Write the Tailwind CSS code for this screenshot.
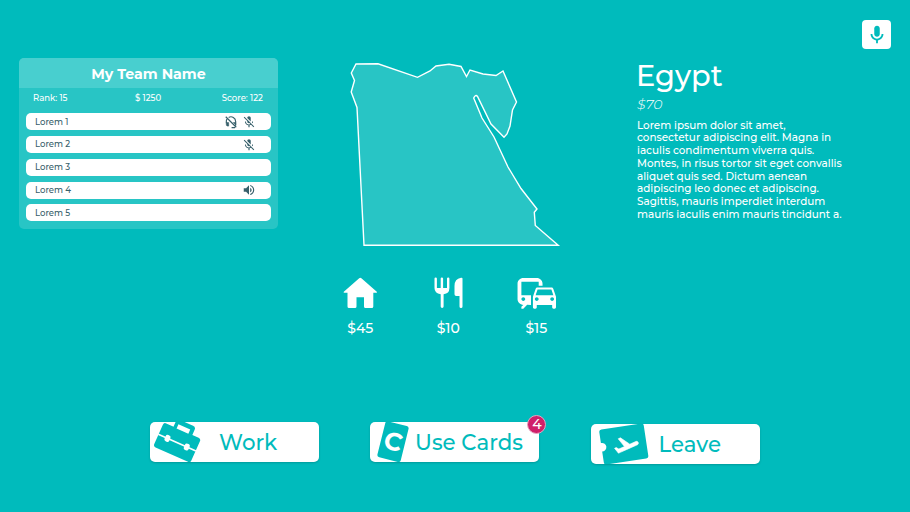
<!DOCTYPE html>
<html lang="en">
<head>
<meta charset="utf-8">
<title>Egypt</title>
<script src="https://cdn.jsdelivr.net/npm/@tailwindcss/browser@4"></script>
</head>
<body class="w-[910px] h-[512px] overflow-hidden bg-[#00bbbc] text-white font-medium font-['Montserrat','Inter',sans-serif]">
<svg class="hidden">
  <symbol id="mic-off" viewBox="0 0 24 24"><path d="M19 11h-1.7c0 .74-.16 1.43-.43 2.05l1.23 1.23c.56-.98.9-2.09.9-3.28zm-4.02.17c0-.06.02-.11.02-.17V5c0-1.66-1.34-3-3-3S9 3.34 9 5v.18l5.98 5.99zM4.27 3L3 4.27l6.01 6.01V11c0 1.66 1.33 3 2.99 3 .22 0 .44-.03.65-.08l1.66 1.66c-.71.33-1.5.52-2.31.52-2.76 0-5.3-2.1-5.3-5.1H5c0 3.41 2.72 6.23 6 6.72V21h2v-3.28c.91-.13 1.77-.45 2.54-.9L19.73 21 21 19.73 4.27 3z"/></symbol>
</svg>
<main class="flex flex-col h-full">
  <header class="flex justify-end pt-5 pr-[19px] h-[58px] shrink-0">
    <button class="flex items-center justify-center size-[29px] rounded-[4px] bg-white text-[#00bbbc]">
      <svg class="size-[22px]" viewBox="0 0 24 24" fill="currentColor"><path d="M12 14c1.66 0 3-1.34 3-3V5c0-1.66-1.34-3-3-3S9 3.34 9 5v6c0 1.66 1.34 3 3 3z"/><path d="M17 11c0 2.76-2.24 5-5 5s-5-2.24-5-5H5c0 3.53 2.61 6.43 6 6.92V21h2v-3.08c3.39-.49 6-3.39 6-6.92h-2z"/></svg>
    </button>
  </header>

  <section class="flex items-start h-[219px] shrink-0 pl-[19px]">
    <div class="w-[259px] h-[171px] rounded-[5px] bg-[#28c5c5] overflow-hidden">
      <h2 class="h-[30px] flex items-center justify-center pt-[3px] bg-[#48cfcf] text-[14.2px] font-bold">My Team Name</h2>
      <div class="grid grid-cols-3 pl-[14px] pr-[15px] h-[25px] pt-[4px] text-[8.5px] leading-[12px] font-medium">
        <span>Rank: 15</span><span class="text-center">$ 1250</span><span class="text-right">Score: 122</span>
      </div>
      <ul class="flex flex-col gap-[5.8px] pt-[0.3px] pl-[7px] pr-[7px] text-[#37606b] text-[8.5px] leading-[17px] font-medium">
        <li class="flex items-center h-[17px] rounded-[5px] bg-white pl-[9px] pr-[15px]"><span class="grow pt-px">Lorem 1</span>
          <svg class="size-[14px] mr-[4.500px]" viewBox="0 0 24 24" fill="none" stroke="currentColor" stroke-width="2"><path d="M3 3l18 18M8 4.2A8 8 0 0 1 20 11v7M4 14v-3a8 8 0 0 1 1-4M13 21.500h6"/><path d="M4 13h4v6H5.500L4 17.500zM16 13h4v4z" fill="currentColor" stroke-width="1"/></svg>
          <svg class="size-[14px]" fill="currentColor"><use href="#mic-off"/></svg></li>
        <li class="flex items-center h-[17px] rounded-[5px] bg-white pl-[9px] pr-[15px]"><span class="grow">Lorem 2</span>
          <svg class="size-[14px]" fill="currentColor"><use href="#mic-off"/></svg></li>
        <li class="flex items-center h-[17px] rounded-[5px] bg-white pl-[9px]"><span class="pt-px">Lorem 3</span></li>
        <li class="flex items-center h-[17px] rounded-[5px] bg-white pl-[9px] pr-[15px]"><span class="grow pt-px">Lorem 4</span>
          <svg class="size-[14px]" viewBox="0 0 24 24" fill="currentColor"><path d="M3 9v6h4l5 5V4L7 9H3zm13.500 3c0-1.770-1.020-3.290-2.500-4.030v8.050c1.480-.73 2.500-2.250 2.500-4.020zM14 3.230v2.060c2.890.86 5 3.540 5 6.710s-2.110 5.850-5 6.710v2.060c4.010-.91 7-4.490 7-8.770s-2.990-7.860-7-8.770z"/></svg></li>
        <li class="flex items-center h-[17px] rounded-[5px] bg-white pl-[9px]"><span class="pt-px">Lorem 5</span></li>
      </ul>
    </div>

    <svg class="ml-[70px] w-[214px] h-[190px] shrink-0" viewBox="348 58 214 190" fill="#28c5c5" stroke="#fff" stroke-width="1.4"><path d="M356 64L378 63.800L417.500 77.300L430 71L436 66L449 64.300L461 66.500L466.500 76.500L470 70L483 74L496 75.500L503 71L516.500 102L512.500 110L510 126L507 134L504 137.300L491 124L477.500 96.500Q475.500 94 473.700 98L482 118L494 137L508 167L521 188.500L537 209L534.300 212.300L535.300 225.500L558.200 245.200H364L357 107.500L351.200 92L354.500 80.500L351.300 73Z"/></svg>

    <article class="ml-[75px] whitespace-nowrap">
      <h1 class="-ml-px text-[28.800px] leading-[36px]">Egypt</h1>
      <p class="text-[14px] leading-[20px] italic font-light">$70</p>
      <p class="mt-[5.500px] text-[10.400px] leading-[12.800px]">Lorem ipsum dolor sit amet,<br>consectetur adipiscing elit. Magna in<br>iaculis condimentum viverra quis.<br>Montes, in risus tortor sit eget convallis<br>aliquet quis sed. Dictum aenean<br>adipiscing leo donec et adipiscing.<br>Sagittis, mauris imperdiet interdum<br>mauris iaculis enim mauris tincidunt a.</p>
    </article>
  </section>

  <section class="grid grid-cols-[88px_88px_88px] pl-[316.300px] h-[145px] shrink-0 text-[14px] leading-[18px]">
    <div class="flex flex-col items-center">
      <svg class="w-[35px] h-[32px]" viewBox="0 0 35 32" fill="#fff"><path d="M16.200 1.300Q17.300.3 18.400 1.300L33.800 14.700Q34.500 15.700 33.300 15.800H30.300V29.500Q30.300 31 28.800 31H22.500Q21 31 21 29.500V20.300H13.500V29.500Q13.500 31 12 31H6Q4.500 31 4.500 29.500V15.800H1.300Q.1 15.700.8 14.700Z"/></svg>
      <span class="mt-[10px]">$45</span>
    </div>
    <div class="flex flex-col items-center">
      <svg class="w-[30px] h-[32px]" viewBox="-.700 0 30 32" fill="#fff"><path d="M.8 1.600a1.200 1.200 0 0 1 2.400 0V11H7V1.600a1.200 1.200 0 0 1 2.400 0V11H13.300V1.600a1.200 1.200 0 0 1 2.400 0V11Q15.700 16.700 9.900 17.200V29.500a1.400 1.400 0 0 1-2.900 0V17.200Q.8 16.500.8 11ZM28.800 1.500V29.500a1.500 1.500 0 0 1-3 0V19H22.500Q20.800 19 20.800 17.300V9Q20.800 1.800 27.300.8 28.800.6 28.800 1.500Z"/></svg>
      <span class="mt-[10px]">$10</span>
    </div>
    <div class="flex flex-col items-center">
      <svg class="w-[40px] h-[32px]" viewBox="1.200 3.500 20.800 16.640" fill="#fff"><path d="M12 4H5C3.340 4 2 5.340 2 7v8c0 1.660 1.340 3 3 3l-1 1v1h1l2-2.030L9 18v-5H4V5.980L13 6v2h2V7c0-1.660-1.340-3-3-3zM5 14c.55 0 1 .45 1 1s-.45 1-1 1-1-.45-1-1 .45-1 1-1zm15.570-4.340c-.14-.4-.52-.66-.97-.66h-7.190c-.46 0-.83.26-.98.66L10 13.770l.01 5.510c0 .38.31.72.69.72h.62c.38 0 .68-.38.68-.76V18h8v1.240c0 .38.31.76.69.76h.61c.38 0 .69-.34.69-.72l.01-1.370v-4.140l-1.430-4.110zm-8.160.34h7.190l1.030 3h-9.250l1.030-3zM12 16c-.55 0-1-.45-1-1s.45-1 1-1 1 .45 1 1-.45 1-1 1zm8 0c-.55 0-1-.45-1-1s.45-1 1-1 1 .45 1 1-.45 1-1 1z"/></svg>
      <span class="mt-[10px]">$15</span>
    </div>
  </section>

  <nav class="flex items-start pl-[149.600px] text-[#00bbbc] text-[21.300px]">
    <button class="mt-[0.400px] flex items-center w-[169px] h-[40px] rounded-[5px] bg-white shadow-[0_1px_2px_rgba(0,60,60,0.25)]">
      <svg class="w-[60px] h-[40px] shrink-0" viewBox="0 0 60 40" fill="#00bbbc"><g transform="translate(27.200 20.400) rotate(24) scale(1.030)"><rect x="-19.700" y="-12.500" width="39.400" height="25.500" rx="2.500"/><path d="M-9.500-12V-18Q-9.500-21-6.500-21H7.500Q10.500-21 10.500-18V-12Z"/><rect x="-6" y="-16.500" width="12.500" height="4.500" fill="#fff"/><path d="M-20 .3H20" stroke="#fff" stroke-width="1.600"/><rect x="-12.700" y="-3" width="5" height="6.600" rx="2" fill="#fff"/><rect x="7.800" y="-3" width="5" height="6.600" rx="2" fill="#fff"/></g></svg>
      <span class="ml-[9.500px] pt-[2px]">Work</span>
    </button>
    <button class="relative ml-[51.500px] flex items-center w-[169px] h-[40px] rounded-[5px] bg-white shadow-[0_1px_2px_rgba(0,60,60,0.25)]">
      <svg class="w-[44px] h-[40px] shrink-0" viewBox="0 0 44 40" fill="#00bbbc"><g transform="translate(23 19.700) rotate(14)"><rect x="-12" y="-18.500" width="24" height="37" rx="2.500"/><text x="0" y="8.500" text-anchor="middle" font-size="25" font-weight="700" fill="#fff">C</text></g></svg>
      <span class="ml-[1px] pt-[2px] whitespace-nowrap">Use Cards</span>
      <span class="absolute left-[157.300px] top-[-7px] flex items-center justify-center size-[19px] rounded-full bg-[#d0206a] border border-[#e5a5c0] text-white text-[14px]">4</span>
    </button>
    <button class="ml-[52px] mt-[1.500px] flex items-center w-[169px] h-[40px] rounded-[5px] bg-white shadow-[0_1px_2px_rgba(0,60,60,0.25)]">
      <svg class="w-[60px] h-[40px] shrink-0" viewBox="0 0 60 40" fill="#00bbbc"><g transform="translate(32.800 20) rotate(-8.500)"><rect x="-22.500" y="-17.700" width="45" height="35.400" rx="2.500"/><circle cx="-22" cy="0" r="4.300" fill="#fff"/></g><path transform="translate(35.300 20.500) rotate(-9) scale(1.200) translate(-12 -9.800)" fill="#fff" stroke="#fff" stroke-width=".5" d="M22.070 9.640c-.21-.8-1.040-1.280-1.840-1.060L14.920 10l-6.900-6.430-1.930.51 4.140 7.170-4.970 1.330-1.970-1.540-1.450.39 1.820 3.160.77 1.330 1.600-.43 5.310-1.420 4.350-1.160L21 11.490c.81-.23 1.280-1.050 1.070-1.850z"/></svg>
      <span class="ml-[7.500px] pt-[2px]">Leave</span>
    </button>
  </nav>
</main>
</body>
</html>
